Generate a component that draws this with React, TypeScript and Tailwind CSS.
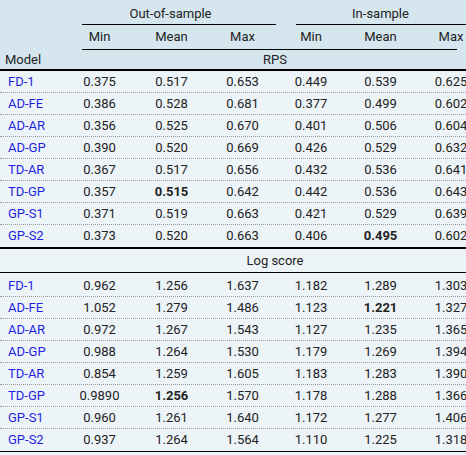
import React from 'react';

type Row = { model: string; vals: string[]; bold?: number };

const rps: Row[] = [
  { model: 'FD-1', vals: ['0.375', '0.517', '0.653', '0.449', '0.539', '0.625'] },
  { model: 'AD-FE', vals: ['0.386', '0.528', '0.681', '0.377', '0.499', '0.602'] },
  { model: 'AD-AR', vals: ['0.356', '0.525', '0.670', '0.401', '0.506', '0.604'] },
  { model: 'AD-GP', vals: ['0.390', '0.520', '0.669', '0.426', '0.529', '0.632'] },
  { model: 'TD-AR', vals: ['0.367', '0.517', '0.656', '0.432', '0.536', '0.641'] },
  { model: 'TD-GP', vals: ['0.357', '0.515', '0.642', '0.442', '0.536', '0.643'], bold: 1 },
  { model: 'GP-S1', vals: ['0.371', '0.519', '0.663', '0.421', '0.529', '0.639'] },
  { model: 'GP-S2', vals: ['0.373', '0.520', '0.663', '0.406', '0.495', '0.602'], bold: 4 },
];

const logScore: Row[] = [
  { model: 'FD-1', vals: ['0.962', '1.256', '1.637', '1.182', '1.289', '1.303'] },
  { model: 'AD-FE', vals: ['1.052', '1.279', '1.486', '1.123', '1.221', '1.327'], bold: 4 },
  { model: 'AD-AR', vals: ['0.972', '1.267', '1.543', '1.127', '1.235', '1.365'] },
  { model: 'AD-GP', vals: ['0.988', '1.264', '1.530', '1.179', '1.269', '1.394'] },
  { model: 'TD-AR', vals: ['0.854', '1.259', '1.605', '1.183', '1.283', '1.390'] },
  { model: 'TD-GP', vals: ['0.9890', '1.256', '1.570', '1.178', '1.288', '1.366'], bold: 1 },
  { model: 'GP-S1', vals: ['0.960', '1.261', '1.640', '1.172', '1.277', '1.406'] },
  { model: 'GP-S2', vals: ['0.937', '1.264', '1.564', '1.110', '1.225', '1.318'] },
];

const cols = 'grid grid-cols-[64px_71px_73px_69px_68px_71px_70px]';

const DataRows = ({ rows }: { rows: Row[] }) => (
  <>
    {rows.map((r, i) => (
      <div
        key={r.model}
        className={`${cols} h-[22px] items-center ${i < rows.length - 1 ? 'border-b border-dotted border-[#9a9a9a]' : ''}`}
      >
        <div className="pl-[8px] text-[#1f1fe6]">{r.model}</div>
        {r.vals.map((v, j) => (
          <div key={j} className={`text-center ${r.bold === j ? 'font-bold' : ''}`}>
            {v}
          </div>
        ))}
      </div>
    ))}
  </>
);

export default function App() {
  return (
    <div
      className="w-[466px] h-[455px] overflow-hidden bg-[#edf4f7] text-[13px] text-[#222]"
      style={{ fontFamily: 'Roboto, "Noto Sans", sans-serif' }}
    >
      <div className="w-[486px]">
        {/* header */}
        <div className="bg-[#d6e6ee]">
          <div className={`${cols} h-[25px]`}>
            <div />
            <div className="col-span-3 ml-[18px] mr-[1px] border-b border-black pr-[17px] pt-[4px] text-center">
              Out-of-sample
            </div>
            <div className="col-span-3 ml-[19px] border-b border-black pr-[21px] pt-[4px] text-center">
              In-sample
            </div>
          </div>
          <div className={`${cols} h-[24px] items-center`}>
            <div />
            <div className="text-center">Min</div>
            <div className="text-center">Mean</div>
            <div className="text-center">Max</div>
            <div className="text-center">Min</div>
            <div className="text-center">Mean</div>
            <div className="text-center">Max</div>
          </div>
          <div className="ml-[82px] h-px w-[375px] bg-black" />
          <div className={`${cols} h-[19px] items-center`}>
            <div className="pl-[5px]">Model</div>
            <div className="col-span-6 text-center">RPS</div>
          </div>
        </div>
        <div className="h-[2px] bg-black" />

        {/* RPS block */}
        <DataRows rows={rps} />
        <div className="h-[2px] bg-black" />

        {/* Log score block */}
        <div className={`${cols} h-[23px] items-center`}>
          <div />
          <div className="col-span-6 text-center">Log score</div>
        </div>
        <div className="h-px bg-black" />
        <div className="pt-[2px]">
          <DataRows rows={logScore} />
        </div>
        <div className="h-px bg-black" />
      </div>
    </div>
  );
}
